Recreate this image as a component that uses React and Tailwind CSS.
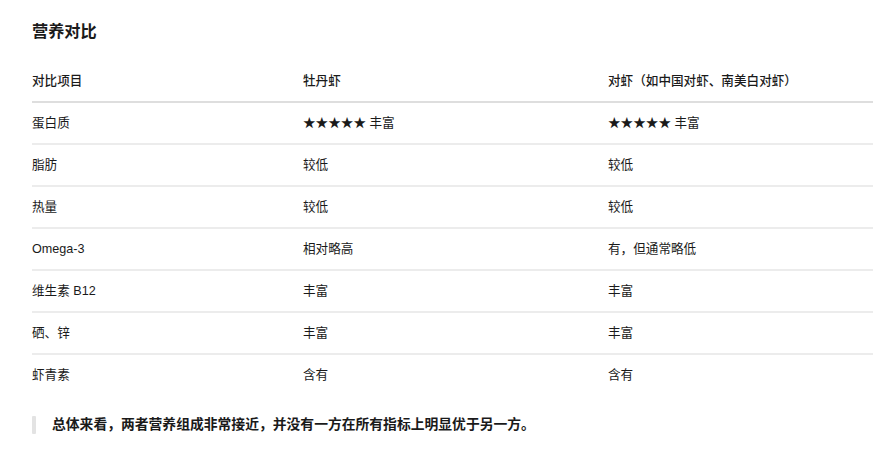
const rows = [
  ["蛋白质", "★★★★★ 丰富", "★★★★★ 丰富"],
  ["脂肪", "较低", "较低"],
  ["热量", "较低", "较低"],
  ["Omega-3", "相对略高", "有，但通常略低"],
  ["维生素 B12", "丰富", "丰富"],
  ["硒、锌", "丰富", "丰富"],
  ["虾青素", "含有", "含有"],
];

export default function App() {
  return (
    <div
      className="w-[873px] h-[455px] bg-white text-[#1a1a1a] pl-[32px] pt-[20px]"
      style={{ fontFamily: '"Liberation Sans", "Noto Sans CJK SC", sans-serif' }}
    >
      <h2 className="text-[16.2px] leading-[23px] font-semibold">营养对比</h2>

      <div className="mt-[19px] text-[12.6px]">
        <div className="grid grid-cols-[271px_305px_1fr] h-[41px] items-center border-b-2 border-[#dedede] font-medium">
          <div>对比项目</div>
          <div>牡丹虾</div>
          <div>对虾（如中国对虾、南美白对虾）</div>
        </div>
        {rows.map((r, i) => (
          <div
            key={i}
            className={
              "grid grid-cols-[271px_305px_1fr] items-center " +
              (i < rows.length - 1 ? "h-[42px] border-b-2 border-[#ececec]" : "h-[40px]")
            }
          >
            <div>{r[0]}</div>
            <div>{r[1]}</div>
            <div>{r[2]}</div>
          </div>
        ))}
      </div>

      <div className="mt-[20px] flex items-center">
        <div className="w-[4px] h-[18px] bg-[#e3e3e3] rounded-[1px]" />
        <p className="ml-[16px] text-[13.8px] font-semibold">
          总体来看，两者营养组成非常接近，并没有一方在所有指标上明显优于另一方。
        </p>
      </div>
    </div>
  );
}
